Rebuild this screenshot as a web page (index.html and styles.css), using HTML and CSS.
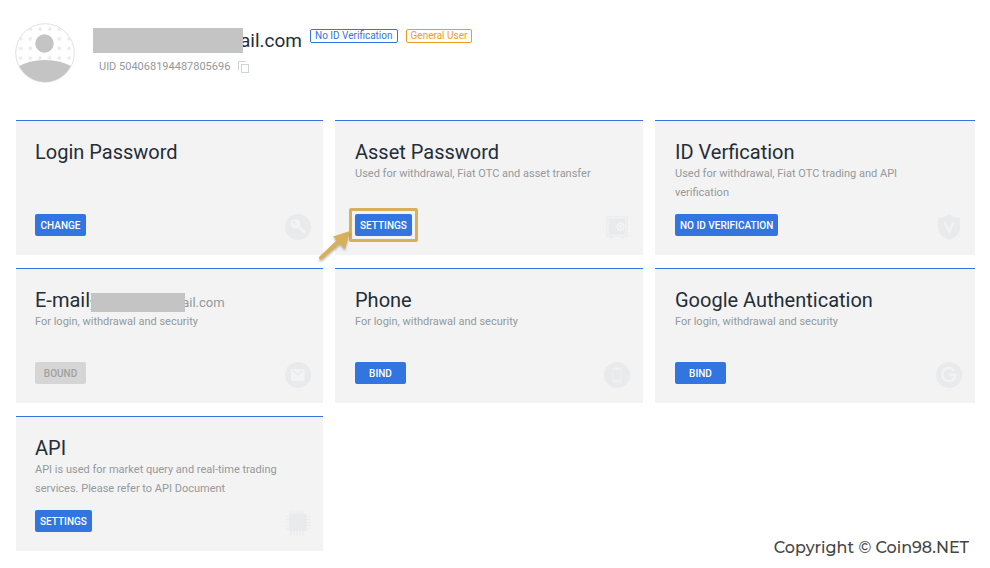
FILE: index.html
```html
<!DOCTYPE html>
<html lang="en">
<head>
<meta charset="utf-8">
<meta name="viewport" content="width=device-width, initial-scale=1">
<title>Account Security</title>
<link rel="stylesheet" href="styles.css">
</head>
<body>
<header class="profile">
  <svg class="avatar" viewBox="0 0 60 60" aria-hidden="true">
    <defs>
      <clipPath id="face"><circle cx="30" cy="30" r="29"/></clipPath>
      <pattern id="dots" x="0.700" y="1" width="9.650" height="9.650" patternUnits="userSpaceOnUse"><circle cx="5" cy="5" r="1.900" fill="#ececec"/></pattern>
    </defs>
    <circle cx="30" cy="30" r="29.3" fill="#fff" stroke="#e2e2e2"/>
    <g clip-path="url(#face)">
      <rect width="60" height="60" fill="url(#dots)"/>
      <circle cx="29.500" cy="20.500" r="12" fill="#fff"/>
      <circle cx="29.500" cy="20.500" r="9.200" fill="#c4c4c4"/>
      <path d="M0 45Q14 37 30 37T60 45V60H0Z" fill="#c4c4c4"/>
    </g>
  </svg>
  <div class="identity">
    <div class="name-row">
      <span class="mask mask-name"></span>
      <h1 class="name">ail.com</h1>
      <span class="tag tag-blue">No ID Verification</span>
      <span class="tag tag-orange">General User</span>
    </div>
    <div class="uid">
      <span>UID 504068194487805696</span>
      <button class="copy" type="button" aria-label="Copy UID">
        <svg viewBox="0 0 12 12" fill="none" stroke="#d0d4d4"><path d="M.5 9V.5H7.500"/><rect x="3.500" y="3.500" width="7" height="8"/></svg>
      </button>
    </div>
  </div>
</header>

<main class="cards">
  <section class="card">
    <h2>Login Password</h2>
    <div class="actions">
      <button class="btn" type="button">CHANGE</button>
      <svg class="icon" viewBox="0 0 26 26" aria-hidden="true"><circle cx="13" cy="13" r="13" fill="#e8eaeb"/><path d="M13 12l7 7" stroke="#f3f3f3" stroke-width="3"/><circle cx="10.500" cy="10" r="4.800" fill="#f3f3f3"/><circle cx="9" cy="8.300" r="1.500" fill="#e8eaeb"/></svg>
    </div>
  </section>

  <section class="card">
    <h2>Asset Password</h2>
    <p>Used for withdrawal, Fiat OTC and asset transfer</p>
    <div class="actions">
      <div class="highlight">
        <button class="btn" type="button">SETTINGS</button>
        <svg class="arrow" viewBox="0 0 36 36" aria-hidden="true"><path d="M32 3L15 8.500 19 12 2 28Q0 30 2 31.500 3 32 5 30.500L22 15.500 27 21Z" fill="#d8b059"/></svg>
      </div>
      <svg class="icon" viewBox="0 0 26 26" aria-hidden="true"><path d="M2 2H24V23H20V24.500H17V23H9V24.500H6V23H2Z" fill="#eceded"/><rect x="4" y="4" width="18" height="17" fill="#e8eaeb" stroke="#f3f3f3"/><circle cx="16.500" cy="12.500" r="4.200" fill="#f3f3f3"/><circle cx="16.500" cy="12.500" r="2" fill="#f3f3f3" stroke="#e8eaeb"/></svg>
    </div>
  </section>

  <section class="card">
    <h2>ID Verfication</h2>
    <p>Used for withdrawal, Fiat OTC trading and API verification</p>
    <div class="actions">
      <button class="btn" type="button">NO ID VERIFICATION</button>
      <svg class="icon" viewBox="0 0 26 26" aria-hidden="true"><path d="M13 0Q18 4 24 4V14Q24 22 13 26 2 22 2 14V4Q8 4 13 0Z" fill="#e8eaeb"/><path d="M8.500 8L13.300 18 17.500 8" fill="none" stroke="#f3f3f3" stroke-width="2"/></svg>
    </div>
  </section>

  <section class="card">
    <div class="title-row">
      <h2>E-mail</h2>
      <span class="email">y</span><span class="mask mask-email"></span><span class="email">ail.com</span>
    </div>
    <p>For login, withdrawal and security</p>
    <div class="actions">
      <button class="btn" type="button" disabled>BOUND</button>
      <svg class="icon" viewBox="0 0 26 26" aria-hidden="true"><circle cx="13" cy="13" r="13" fill="#e8eaeb"/><rect x="6" y="7" width="13.500" height="12" rx="1" fill="#f3f3f3"/><path d="M7.500 8.500L12.800 12.500 18 8.500" fill="none" stroke="#e8eaeb" stroke-width="1.500"/></svg>
    </div>
  </section>

  <section class="card">
    <h2>Phone</h2>
    <p>For login, withdrawal and security</p>
    <div class="actions">
      <button class="btn" type="button">BIND</button>
      <svg class="icon" viewBox="0 0 26 26" aria-hidden="true"><circle cx="13" cy="13" r="13" fill="#e8eaeb"/><rect x="9" y="6" width="8" height="14" rx="1" fill="none" stroke="#efefef" stroke-width="1.200"/><path d="M9 7H17M9 18.700H17" stroke="#f1f1f1" stroke-width="1.600"/></svg>
    </div>
  </section>

  <section class="card">
    <h2>Google Authentication</h2>
    <p>For login, withdrawal and security</p>
    <div class="actions">
      <button class="btn" type="button">BIND</button>
      <svg class="icon" viewBox="0 0 26 26" aria-hidden="true"><circle cx="13" cy="13" r="13" fill="#e8eaeb"/><path d="M18 8.300A6.600 6.600 0 1 0 19.600 13H13" fill="none" stroke="#f2f2f2" stroke-width="2.600"/></svg>
    </div>
  </section>

  <section class="card">
    <h2>API</h2>
    <p>API is used for market query and real-time trading services. Please refer to API Document</p>
    <div class="actions">
      <button class="btn" type="button">SETTINGS</button>
      <svg class="icon" viewBox="0 0 26 26" aria-hidden="true"><path d="M6 .5V25.500M9 .5V25.500M12 .5V25.500M15 .5V25.500M18 .5V25.500M1 6.500H26M1 9.500H26M1 12.500H26M1 15.500H26M1 18.500H26" stroke="#ededee" stroke-width="1.500"/><rect x="4.500" y="4" width="17" height="17" fill="#e8eaeb"/></svg>
    </div>
  </section>

  <footer class="copyright">Copyright © Coin98.NET</footer>
</main>
</body>
</html>
```
FILE: styles.css
```css
* { box-sizing: border-box; }

body {
  margin: 0;
  padding: 23px 15px 12px 16px;
  background: #fff;
  color: #252d38;
  font-family: Roboto, "Liberation Sans", sans-serif;
}

h1, h2, p { margin: 0; font-weight: 400; }
svg { display: block; }

.profile {
  display: flex;
  gap: 18px;
  margin-bottom: 37px;
}

.avatar { width: 60px; height: 60px; margin-left: -1px; }

.identity { padding-top: 5px; }

.name-row { display: flex; align-items: flex-start; }

.mask {
  position: relative;
  z-index: 1;
  flex: none;
  background: #c4c4c4;
}

.mask-name { width: 150px; height: 25px; margin-right: -3px; }

.name { font-size: 19px; line-height: 25px; }

.tag {
  margin: 1px 0 0 8px;
  padding: 0 4px;
  border: 1px solid;
  border-radius: 2px;
  font-size: 10px;
  line-height: 12px;
}

.tag-blue { color: #3275e0; }
.tag-orange { color: #f29a1f; }

.uid {
  display: flex;
  align-items: center;
  gap: 8px;
  padding: 5px 6px;
  color: #94999c;
  font-size: 11px;
  line-height: 18px;
}

.copy { padding: 0; border: 0; background: none; }
.copy svg { width: 12px; height: 12px; }

.cards {
  display: grid;
  grid-template-columns: 307fr 308fr 320fr;
  grid-auto-rows: minmax(135px, auto);
  gap: 13px 12px;
}

.card {
  display: flex;
  flex-direction: column;
  padding: 19px 13px 15px 20px;
  border-top: 1px solid #3275e0;
  background: #f3f3f3;
}

.card:nth-child(3n + 1) { padding-left: 19px; padding-right: 12px; }

.card h2 { font-size: 20px; line-height: 24px; }

.card p {
  max-width: 260px;
  color: #94999c;
  font-size: 11px;
  line-height: 19px;
}

.title-row { display: flex; height: 24px; }

.email { color: #94999c; font-size: 13px; line-height: 29px; }
.mask-email { width: 94px; height: 19px; margin: 5px -3px 0 -5px; }

.actions {
  display: flex;
  align-items: flex-start;
  justify-content: space-between;
  height: 26px;
  margin-top: auto;
}

.icon { width: 26px; height: 26px; }

.btn {
  min-width: 51px;
  height: 22px;
  padding: 1px 5px 0;
  border: 0;
  border-radius: 2px;
  background: #3275e0;
  color: #fff;
  font: 500 10px/21px Roboto, "Liberation Sans", sans-serif;
}

.btn:disabled { background: #d5d5d5; color: #a0a0a0; }

.highlight {
  position: relative;
  margin: -6px 0 0 -6px;
  padding: 3px;
  border: 3px solid #d8b059;
  border-radius: 2px;
}

.highlight .btn { display: block; }

.arrow {
  position: absolute;
  right: 100%;
  top: 17px;
  width: 36px;
  height: 36px;
  margin-right: -2px;
  filter: drop-shadow(0 2px 1px #0004);
}

.copyright {
  grid-column: 2 / -1;
  align-self: end;
  justify-self: end;
  margin: 0 6px -7px 0;
  color: #464646;
  font: 500 16px/20px Montserrat, Inter, sans-serif;
}
```
